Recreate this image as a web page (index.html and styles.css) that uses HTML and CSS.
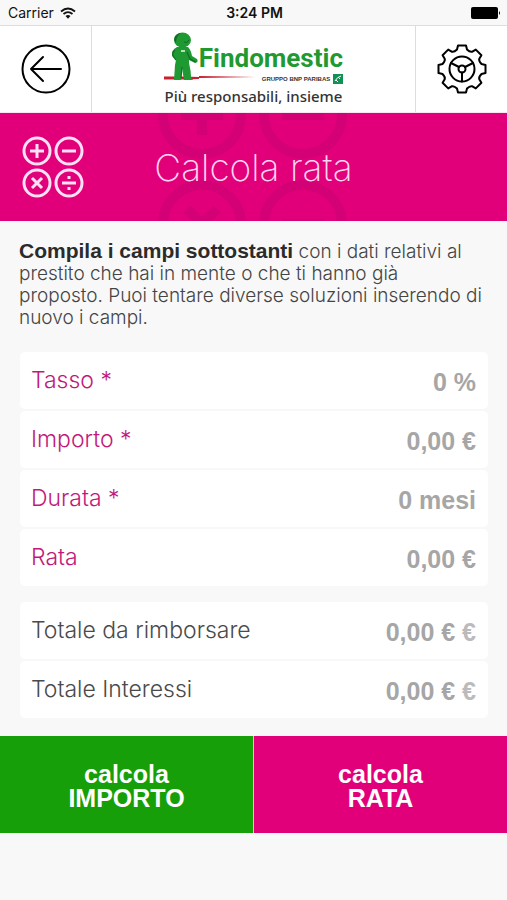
FILE: index.html
```html
<!DOCTYPE html>
<html lang="it">
<head>
  <meta charset="UTF-8" />
  <title>Findomestic - Calcola rata</title>
  <meta content="width=device-width, initial-scale=1.0" name="viewport" />
  <link rel="stylesheet" href="styles.css">
</head>
<body>
  <div class="status-bar">
    <div class="carrier">
      <span>Carrier</span>
      <svg class="wifi" viewBox="0 0 16 12" aria-hidden="true">
        <path d="M1 4.500Q8-1.500 15 4.500M3.500 7Q8 3.200 12.500 7" fill="none" stroke="#111" stroke-width="1.800"/>
        <path d="M5.500 9Q8 6.800 10.500 9L8 11.700z" fill="#111"/>
      </svg>
    </div>
    <div class="clock">3:24 PM</div>
    <svg class="battery" viewBox="0 0 30 12" aria-hidden="true">
      <rect width="27" height="12" rx="2"/>
      <path d="M28 4q2 2 0 4z"/>
    </svg>
  </div>

  <header>
    <a class="nav-icon back" href="#" aria-label="Indietro">
      <svg viewBox="0 0 50 50">
        <circle cx="25" cy="25" r="23.500"/>
        <path d="M40 25H10M22 13L10 25L22 37"/>
      </svg>
    </a>
    <a class="logo" href="#">
      <span class="brand">
        <svg class="mascot" viewBox="0 0 35 50" aria-hidden="true">
          <path d="M0 44.500H20L35 45V47L20 47.500H0z" fill="#c8202f"/>
          <g fill="#1f9a33">
            <ellipse cx="18.500" cy="8" rx="8.500" ry="7.500"/>
            <path d="M13 15L24 15Q27 18 28 24L33 27Q35 30 31 31L25 28L25 31Q27 39 27 45L29 48H20L18 36L17 48H10L11 33L12 28L8 24Q7 18 13 15z"/>
          </g>
          <path d="M11 18Q6 22 12 28M18 35L17 46M23 20L26 27L32 30" fill="none" stroke="#146c25" stroke-width="1.200"/>
          <path d="M10 8Q10 2 17 1Q12 4 12 11z" fill="#146c25"/>
          <path d="M20 10Q23 12 25 8" fill="none" stroke="#146c25"/>
          <path d="M17 18h4v2h-4z" fill="#b8e0b8"/>
        </svg>
        <span class="brand-text">
          <span class="brand-name">Findomestic</span>
          <span class="group">
            <svg class="red-line" viewBox="0 0 60 4" preserveAspectRatio="none" aria-hidden="true"><path d="M0 1L60 2L0 3z" fill="#c8202f"/></svg>
            GRUPPO BNP PARIBAS
            <svg class="bnp" viewBox="0 0 10 10" aria-hidden="true">
              <rect width="10" height="10" fill="#119156"/>
              <path d="M2 7Q4 3 8 2M5 3l2 2M3 6l2 2" fill="none" stroke="#fff"/>
            </svg>
          </span>
        </span>
      </span>
      <span class="tagline">Più responsabili, insieme</span>
    </a>
    <a class="nav-icon settings" href="#" aria-label="Impostazioni">
      <svg viewBox="-25 -25 50 50">
        <path d="M-4-23.500H4L5-19.500Q8-16.500 10.300-17.300L13.800-19.400L19.400-13.800L17.300-10.300Q16.500-8 19.500-5L23.500-4V4L19.500 5Q16.500 8 17.300 10.300L19.400 13.800L13.800 19.400L10.300 17.300Q8 16.500 5 19.500L4 23.500H-4L-5 19.500Q-8 16.500-10.300 17.300L-13.800 19.400L-19.400 13.800L-17.300 10.300Q-16.500 8-19.500 5L-23.500 4V-4L-19.500-5Q-16.500-8-17.300-10.300L-19.400-13.800L-13.800-19.400L-10.300-17.300Q-8-16.500-5-19.500z"/>
        <circle r="12.500"/>
        <circle r="3.500"/>
        <path d="M0 3.500V12.500M-3-2L-11-6M3-2L11-6"/>
      </svg>
    </a>
  </header>

  <div class="banner">
    <svg class="banner-bg" viewBox="0 0 220 108" aria-hidden="true">
      <g fill="none" stroke-width="10">
        <circle cx="58" cy="2" r="39"/>
        <circle cx="159" cy="2" r="39"/>
        <circle cx="58" cy="111" r="39"/>
        <circle cx="159" cy="111" r="39"/>
        <path d="M37 2H79M58-18V22M138 2H180M43 96L73 126M73 96L43 126M138 111H180"/>
      </g>
    </svg>
    <svg class="calc-icon" viewBox="0 0 62 62" aria-hidden="true">
      <circle cx="15" cy="15" r="13"/>
      <circle cx="47" cy="15" r="13"/>
      <circle cx="15" cy="47" r="13"/>
      <circle cx="47" cy="47" r="13"/>
      <path d="M8 15H22M15 8V22M40 15H54M10 42L20 52M20 42L10 52M40 47H54"/>
      <path d="M47 40V43M47 51V54"/>
    </svg>
    <h1>Calcola rata</h1>
  </div>

  <form>
    <p class="intro"><strong>Compila i campi sottostanti</strong> con i dati relativi al prestito che hai in mente o che ti hanno già proposto. Puoi tentare diverse soluzioni inserendo di nuovo i campi.</p>

    <div class="fields">
      <div class="row">
        <label for="tasso">Tasso *</label>
        <input id="tasso" type="text" value="0 %" />
      </div>
      <div class="row">
        <label for="importo">Importo *</label>
        <input id="importo" type="text" value="0,00 €" />
      </div>
      <div class="row">
        <label for="durata">Durata *</label>
        <input id="durata" type="text" value="0 mesi" />
      </div>
      <div class="row">
        <label for="rata">Rata</label>
        <input id="rata" type="text" value="0,00 €" />
      </div>
    </div>

    <div class="fields totals">
      <div class="row">
        <label for="totale">Totale da rimborsare</label>
        <div class="amount"><output id="totale">0,00 €</output> <span class="unit">€</span></div>
      </div>
      <div class="row">
        <label for="interessi">Totale Interessi</label>
        <div class="amount"><output id="interessi">0,00 €</output> <span class="unit">€</span></div>
      </div>
    </div>

    <div class="buttons">
      <button class="btn-importo" type="button">calcola<br>IMPORTO</button>
      <button class="btn-rata" type="button">calcola<br>RATA</button>
    </div>
  </form>
</body>
</html>
```
FILE: styles.css
```css
* { box-sizing: border-box; }
body { font-family: "Liberation Sans", Arial, sans-serif; margin: 0; background: #f8f8f8; color: #333; }
a { color: inherit; text-decoration: none; }

.status-bar {
  display: grid;
  grid-template-columns: 1fr auto 1fr;
  align-items: center;
  height: 26px;
  padding: 0 6px 0 8px;
  border-bottom: 1px solid #ddd;
  font-family: Inter, sans-serif;
  font-size: 14px;
  color: #111;
}
.carrier { display: flex; align-items: center; gap: 6px; }
.wifi { width: 16px; height: 12px; }
.clock { font-weight: 600; }
.battery { width: 30px; height: 12px; justify-self: end; }

header { display: flex; height: 87px; background: #fff; border-bottom: 1px solid #fbe4f3; }
.nav-icon { display: flex; align-items: center; justify-content: center; width: 92px; }
.nav-icon svg { width: 50px; height: 50px; fill: none; stroke: #000; stroke-width: 2; stroke-linejoin: round; stroke-linecap: round; }
.back { border-right: 1px solid #ddd; }
.settings { border-left: 1px solid #ddd; }

.logo { flex: 1; display: flex; flex-direction: column; align-items: center; padding-top: 6px; }
.brand { display: flex; }
.mascot { width: 35px; height: 50px; }
.brand-text { display: flex; flex-direction: column; padding-top: 10px; }
.brand-name { font-family: Roboto, sans-serif; font-weight: bold; font-size: 26px; line-height: 32px; color: #1f9a33; }
.group { display: flex; align-items: center; gap: 3px; font-size: 6px; line-height: 10px; font-weight: bold; white-space: nowrap; }
.red-line { flex: 1; min-width: 0; height: 4px; margin-top: -5px; }
.bnp { width: 10px; height: 10px; }
.tagline { padding-top: 2px; font-family: "Noto Sans", sans-serif; font-weight: 500; font-size: 15px; line-height: 20px; color: #333; }

.banner {
  position: relative;
  display: grid;
  grid-template-columns: 1fr auto 1fr;
  align-items: center;
  height: 108px;
  padding: 0 22px;
  background: #e2007a;
  color: #fff;
}
.banner-bg { position: absolute; top: 0; left: 50%; width: 220px; height: 108px; margin-left: -110px; stroke: #d40075; }
.calc-icon { width: 62px; height: 62px; fill: none; stroke: #ffe0f5; stroke-width: 3; }
.banner h1 { position: relative; margin: 0; font-family: Inter, sans-serif; font-weight: 200; font-size: 37px; color: #ffd6f1; }

.intro { margin: 0; padding: 20px 20px 23px 19px; font-family: Inter, sans-serif; font-weight: 300; font-size: 19px; line-height: 22px; color: #444; }
.intro strong { font-family: "Liberation Sans", sans-serif; font-weight: bold; font-size: 21px; line-height: 20px; color: #2b2b2b; }

.fields { display: flex; flex-direction: column; gap: 2px; margin: 0 19px 16px 20px; }
.row { display: flex; align-items: center; justify-content: space-between; height: 57px; padding: 0 12px 0 11px; background: #fff; border-radius: 5px; }
.row label { padding-bottom: 1px; font-family: Inter, sans-serif; font-weight: 300; font-size: 23px; color: #c2187a; white-space: nowrap; }
.row input { flex: 1; min-width: 0; padding: 4px 0 0; border: none; background: none; text-align: right; font: bold 25px "Liberation Sans", sans-serif; color: #a6a6a6; }

.totals { margin-bottom: 18px; }
.totals label { color: #4a4a4a; }
.amount { padding-top: 4px; font-size: 25px; font-weight: bold; color: #a6a6a6; }
.unit { color: #bbb; }

.buttons { display: grid; grid-template-columns: 1fr 1fr; gap: 1px; background: #ccc; }
.buttons button { height: 97px; padding: 3px 0 0; border: none; color: #fff; font: bold 25px/24px "Liberation Sans", sans-serif; cursor: pointer; }
.btn-importo { background: #169f08; }
.btn-rata { background: #e2007a; }
```
